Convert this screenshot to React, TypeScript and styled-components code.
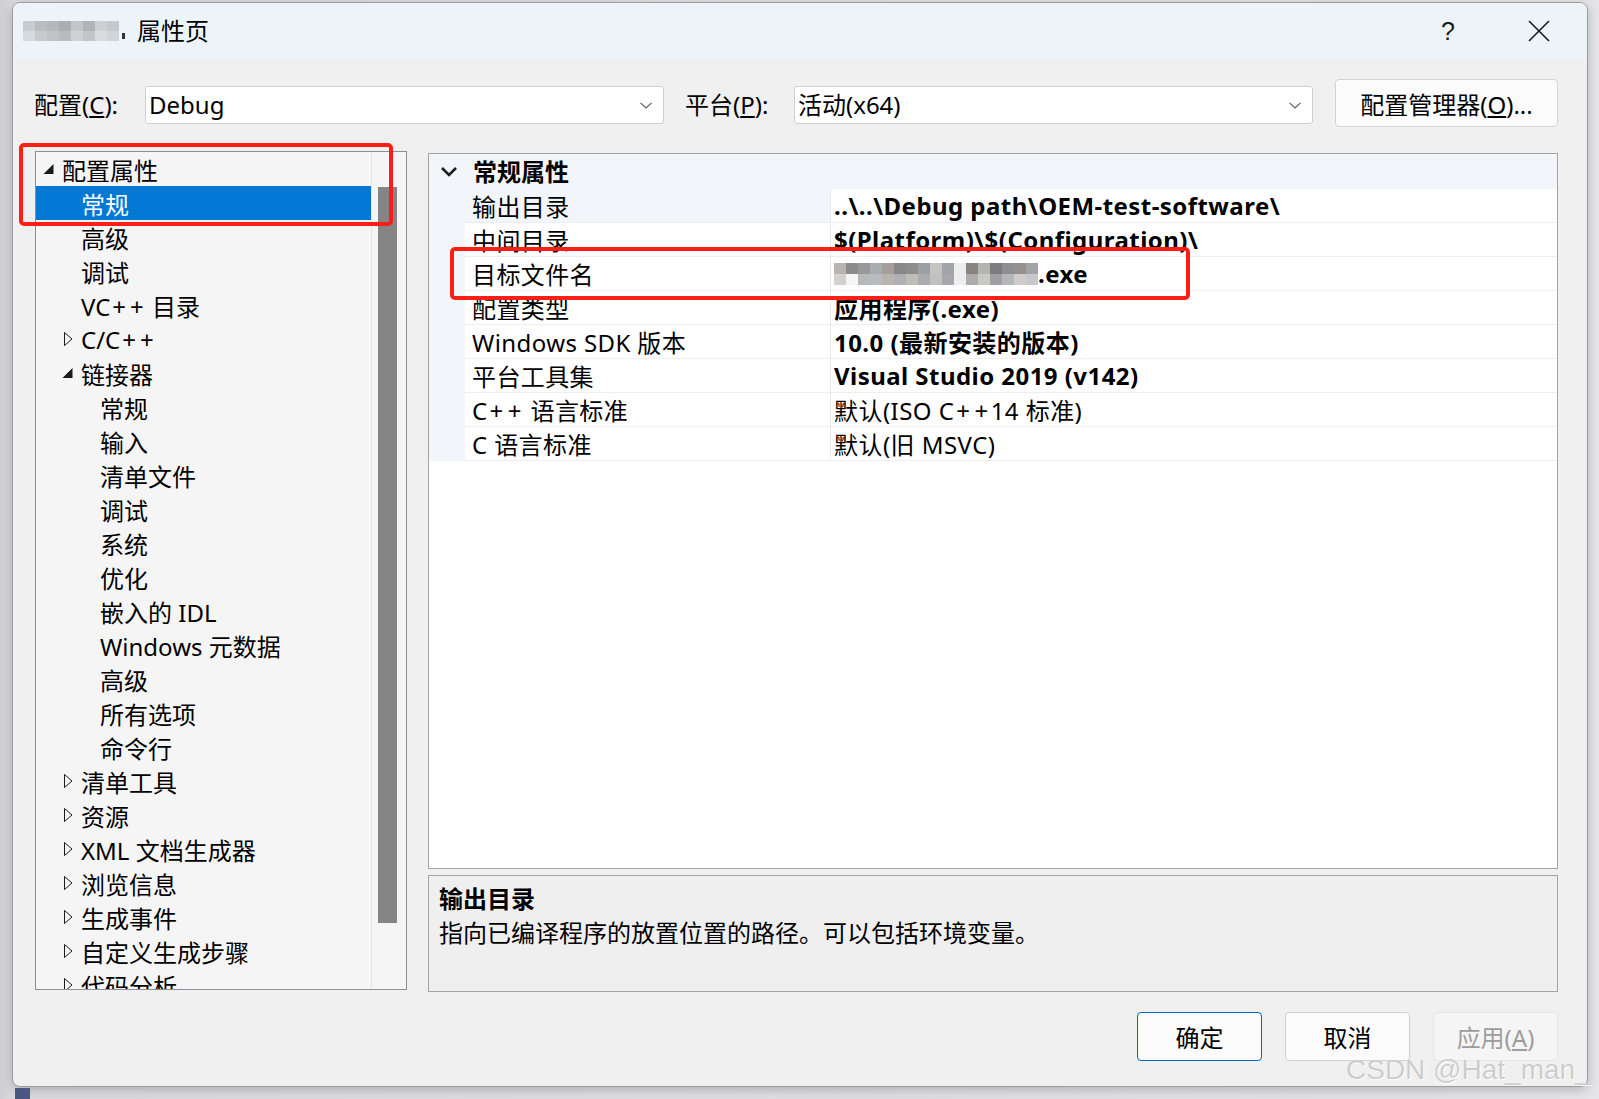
import React from 'react';
import styled, { createGlobalStyle } from 'styled-components';

const FONT = `"Noto Sans", "Noto Sans CJK SC", sans-serif`;

const GlobalStyle = createGlobalStyle`
  html, body {
    margin: 0;
    padding: 0;
  }
  body {
    width: 1599px;
    height: 1099px;
    overflow: hidden;
    background: linear-gradient(90deg, #cfcfd3 0px, #dcdce0 14px, #e6e6e8 100%);
    font-family: ${FONT};
    color: #000;
  }
`;

const Screen = styled.div`
  position: relative;
  width: 1599px;
  height: 1099px;
  padding: 2px 0 0 12px;
  box-sizing: border-box;
`;

const Dialog = styled.div`
  width: 1576px;
  height: 1085px;
  box-sizing: border-box;
  background: #f0f0f0;
  border: 1px solid #9c9c9c;
  border-radius: 8px;
  box-shadow: 0 3px 12px rgba(0, 0, 0, 0.22);
  display: flex;
  flex-direction: column;
  overflow: hidden;
`;

/* ---------- title bar ---------- */

const TitleBar = styled.div`
  height: 56px;
  flex: none;
  background: #edf4f9;
  display: flex;
  align-items: center;
  padding: 0 37px 0 10px;
`;

const Mosaic = styled.div<{ $cols: number; $cw: number; $rh: number }>`
  display: grid;
  grid-template-columns: repeat(${({ $cols }) => $cols}, ${({ $cw }) => $cw}px);
  grid-auto-rows: ${({ $rh }) => $rh}px;
  filter: blur(0.6px);
`;

const Tile = styled.span<{ $c: string }>`
  background: ${({ $c }) => $c};
`;

const TitleText = styled.span`
  font-size: 24px;
  margin-left: 12px;
  line-height: 1;
`;

const TitleTail = styled.span`
  width: 3px;
  height: 6px;
  background: #333;
  margin: 10px 0 0 3px;
`;

const TitleActions = styled.div`
  margin-left: auto;
  display: flex;
  align-items: center;
  gap: 73px;
`;

const Help = styled.span`
  font-family: "Liberation Sans", sans-serif;
  font-size: 25px;
  font-weight: 300;
  color: #1a1a1a;
`;

/* ---------- toolbar ---------- */

const Toolbar = styled.div`
  flex: none;
  margin-top: 20px;
  height: 48px;
  display: flex;
  align-items: center;
  padding-left: 21px;
`;

const FieldLabel = styled.label<{ $width: number; $gap?: number }>`
  width: ${({ $width }) => $width}px;
  margin-left: ${({ $gap = 0 }) => $gap}px;
  font-size: 24px;
  line-height: 1;
  margin-top: 4px;
  flex: none;
`;

const Select = styled.div`
  width: 519px;
  height: 38px;
  margin-top: 4px;
  flex: none;
  box-sizing: border-box;
  background: #fff;
  border: 1px solid #cfcfcf;
  border-radius: 3px;
  display: flex;
  align-items: center;
  padding: 0 11px 0 3px;
  font-size: 24px;
`;

const SelectValue = styled.span`
  flex: 1;
  line-height: 1;
`;

const ManagerButton = styled.button`
  margin-left: 22px;
  width: 223px;
  height: 48px;
  box-sizing: border-box;
  background: #fbfbfb;
  border: 1px solid #d4d4d4;
  border-radius: 4px;
  font-family: ${FONT};
  font-size: 24px;
  color: #000;
  padding: 0;
`;

/* ---------- content ---------- */

const Content = styled.div`
  flex: none;
  margin-top: 24px;
  display: flex;
  padding-left: 22px;
`;

const TreePanel = styled.div`
  width: 372px;
  height: 839px;
  box-sizing: border-box;
  border: 1px solid #8d8f96;
  background: #f5f5f5;
  display: flex;
  overflow: hidden;
`;

const TreeList = styled.ul`
  list-style: none;
  margin: 0;
  padding: 0;
  width: 335px;
  flex: none;
`;

const TreeRow = styled.li<{ $level: number; $selected?: boolean }>`
  height: 34px;
  display: flex;
  align-items: center;
  padding-left: ${({ $level }) => 7 + $level * 19}px;
  background: ${({ $selected }) => ($selected ? '#0078d4' : 'transparent')};
  color: ${({ $selected }) => ($selected ? '#fff' : '#000')};
  font-size: 24px;
  white-space: pre;
`;

const Expander = styled.span`
  width: 19px;
  flex: none;
  display: flex;
  align-items: center;
`;

const Text = styled.span`
  white-space: pre;
`;

const Plus = styled.span`
  margin: 0 2px;
`;

const ScrollTrack = styled.div`
  flex: 1;
  border-left: 1px solid #e4e4e4;
  padding: 35px 0 0 6px;
`;

const ScrollThumb = styled.div`
  width: 19px;
  height: 736px;
  background: #858585;
`;

const RightColumn = styled.div`
  margin-left: 21px;
  margin-top: 2px;
  width: 1130px;
  display: flex;
  flex-direction: column;
`;

const Grid = styled.div`
  height: 716px;
  box-sizing: border-box;
  border: 1px solid #a3a3a3;
  background: #fff;
`;

const CategoryRow = styled.div`
  height: 35px;
  background: #f2f5fa;
  display: flex;
  align-items: center;
  padding-left: 11px;
  font-size: 24px;
  font-weight: 700;
`;

const CategoryTitle = styled.span`
  margin-left: 15px;
  line-height: 1;
`;

const PropRow = styled.div`
  height: 34px;
  display: flex;
`;

const Gutter = styled.div`
  width: 36px;
  flex: none;
  background: #f2f5fa;
`;

const NameCell = styled.div<{ $selected?: boolean }>`
  width: 366px;
  flex: none;
  box-sizing: border-box;
  padding-left: 7px;
  display: flex;
  align-items: center;
  border-bottom: 1px solid #eceef2;
  border-right: 1px solid #e8e9ec;
  background: ${({ $selected }) => ($selected ? '#f2f5fa' : '#fff')};
  font-size: 24px;
  letter-spacing: 0.4px;
`;

const ValueCell = styled.div<{ $bold?: boolean }>`
  flex: 1;
  box-sizing: border-box;
  padding-left: 3px;
  display: flex;
  align-items: center;
  border-bottom: 1px solid #eceef2;
  font-size: 24px;
  letter-spacing: 0.45px;
  font-weight: ${({ $bold }) => ($bold ? 700 : 400)};
`;

const Description = styled.div`
  margin-top: 6px;
  height: 117px;
  box-sizing: border-box;
  border: 1px solid #a3a3a3;
  background: #efefef;
  padding: 6px 10px 0;
  font-size: 24px;
  line-height: 34px;
`;

const DescTitle = styled.div`
  font-weight: 700;
`;

const Footer = styled.div`
  margin-top: 20px;
  display: flex;
  justify-content: flex-end;
  gap: 23px;
`;

const DialogButton = styled.button<{ $primary?: boolean; $disabled?: boolean }>`
  width: 125px;
  height: 49px;
  box-sizing: border-box;
  border-radius: 4px;
  font-family: ${FONT};
  font-size: 24px;
  padding: 0;
  background: ${({ $disabled }) => ($disabled ? '#f5f5f5' : '#fbfbfb')};
  color: ${({ $disabled }) => ($disabled ? '#9d9d9d' : '#000')};
  border: 1px solid
    ${({ $primary, $disabled }) => ($primary ? '#0067c0' : $disabled ? '#e6e6e6' : '#d0d0d0')};
`;

/* ---------- overlays ---------- */

const Highlight = styled.div<{ $x: number; $y: number; $w: number; $h: number }>`
  position: absolute;
  left: ${({ $x }) => $x}px;
  top: ${({ $y }) => $y}px;
  width: ${({ $w }) => $w}px;
  height: ${({ $h }) => $h}px;
  box-sizing: border-box;
  border: 4px solid #fd1f16;
  border-radius: 5px;
  pointer-events: none;
`;

const Watermark = styled.div`
  position: absolute;
  left: 1346px;
  top: 1054px;
  font-family: "Liberation Sans", Arial, sans-serif;
  font-size: 28px;
  color: rgba(196, 196, 196, 0.85);
  text-shadow: 0 0 1px #fff, 1px 1px 0 rgba(255, 255, 255, 0.8);
  white-space: nowrap;
`;

const TaskbarEdge = styled.div`
  position: absolute;
  left: 15px;
  top: 1088px;
  width: 15px;
  height: 11px;
  background: #4b5781;
`;

/* ---------- icons ---------- */

const ChevronDown = () => (
  <svg width="12" height="7" viewBox="0 0 12 7">
    <path d="M0.5 0.8 L6 6 L11.5 0.8" fill="none" stroke="#5a5a5a" strokeWidth="1.1" />
  </svg>
);

const CloseIcon = () => (
  <svg width="22" height="22" viewBox="0 0 22 22">
    <path d="M1 1 L21 21 M21 1 L1 21" stroke="#1a1a1a" strokeWidth="1.6" />
  </svg>
);

const CategoryChevron = () => (
  <svg width="18" height="11" viewBox="0 0 18 11">
    <path d="M2 2 L9 9 L16 2" fill="none" stroke="#1e1e1e" strokeWidth="2.6" />
  </svg>
);

const ExpandedGlyph = () => (
  <svg width="11" height="10" viewBox="0 0 11 10">
    <polygon points="10.5,0 10.5,10 0.5,10" fill="#1a1a1a" />
  </svg>
);

const CollapsedGlyph = () => (
  <svg width="12" height="14" viewBox="0 0 12 14" style={{ marginLeft: 1 }}>
    <polygon points="1.5,0.5 9,7 1.5,13.5" fill="none" stroke="#1a1a1a" strokeWidth="1" />
  </svg>
);

/* the dialog font draws "+" wide; widen it here */
const Label = ({ text }: { text: string }) => (
  <Text>
    {text.split('+').flatMap((part, i) => (i === 0 ? [part] : [<Plus key={i}>+</Plus>, part]))}
  </Text>
);

/* ---------- data ---------- */

type TreeItem = { label: string; level: number; state?: 'open' | 'closed'; selected?: boolean };

const treeItems: TreeItem[] = [
  { label: '配置属性', level: 0, state: 'open' },
  { label: '常规', level: 1, selected: true },
  { label: '高级', level: 1 },
  { label: '调试', level: 1 },
  { label: 'VC++ 目录', level: 1 },
  { label: 'C/C++', level: 1, state: 'closed' },
  { label: '链接器', level: 1, state: 'open' },
  { label: '常规', level: 2 },
  { label: '输入', level: 2 },
  { label: '清单文件', level: 2 },
  { label: '调试', level: 2 },
  { label: '系统', level: 2 },
  { label: '优化', level: 2 },
  { label: '嵌入的 IDL', level: 2 },
  { label: 'Windows 元数据', level: 2 },
  { label: '高级', level: 2 },
  { label: '所有选项', level: 2 },
  { label: '命令行', level: 2 },
  { label: '清单工具', level: 1, state: 'closed' },
  { label: '资源', level: 1, state: 'closed' },
  { label: 'XML 文档生成器', level: 1, state: 'closed' },
  { label: '浏览信息', level: 1, state: 'closed' },
  { label: '生成事件', level: 1, state: 'closed' },
  { label: '自定义生成步骤', level: 1, state: 'closed' },
  { label: '代码分析', level: 1, state: 'closed' },
];

type Prop = { name: string; value: string; bold?: boolean; masked?: boolean };

const props: Prop[] = [
  { name: '输出目录', value: '..\\..\\Debug path\\OEM-test-software\\', bold: true },
  { name: '中间目录', value: '$(Platform)\\$(Configuration)\\', bold: true },
  { name: '目标文件名', value: '.exe', bold: true, masked: true },
  { name: '配置类型', value: '应用程序(.exe)', bold: true },
  { name: 'Windows SDK 版本', value: '10.0 (最新安装的版本)', bold: true },
  { name: '平台工具集', value: 'Visual Studio 2019 (v142)', bold: true },
  { name: 'C++ 语言标准', value: '默认(ISO C++14 标准)' },
  { name: 'C 语言标准', value: '默认(旧 MSVC)' },
];

const titleTiles = [
  '#c9cccf', '#b9bdc0', '#b4b8bb', '#a9aeb1', '#c2c6c8', '#b0b4b7', '#cdd0d2', '#c6c9cb',
  '#d7dadc', '#c8cbce', '#bfc3c6', '#b8bcbf', '#cfd2d4', '#c3c6c9', '#d9dcde', '#d2d5d7',
];

const fileTiles = [
  '#b8b4b4', '#8c8c8c', '#989898', '#a8adb0', '#a49e9c', '#888888', '#8e8c8c', '#9aa0a4', '#c4c4c0',
  '#a0a4a8', '#eceef0', '#888480', '#b4b4b0', '#7c7c80', '#8c9090', '#989090', '#a0a4a8',
  '#d4d0d0', '#f4f6f4', '#b8b8b8', '#b8bcc0', '#b8b4b0', '#b0b0b4', '#c0bcb8', '#acacb0', '#c0c0c0',
  '#a8a8ac', '#eceef0', '#b0acac', '#c8c8c4', '#a0a0a4', '#b4b8b8', '#d0cccc', '#c8c8cc',
];

export default function App() {
  return (
    <>
      <GlobalStyle />
      <Screen>
        <Dialog>
          <TitleBar>
            <Mosaic $cols={8} $cw={12} $rh={10}>
              {titleTiles.map((c, i) => (
                <Tile key={i} $c={c} />
              ))}
            </Mosaic>
            <TitleTail />
            <TitleText>属性页</TitleText>
            <TitleActions>
              <Help>?</Help>
              <CloseIcon />
            </TitleActions>
          </TitleBar>

          <Toolbar>
            <FieldLabel $width={111}>
              配置(<u>C</u>):
            </FieldLabel>
            <Select>
              <SelectValue>Debug</SelectValue>
              <ChevronDown />
            </Select>
            <FieldLabel $width={109} $gap={21}>
              平台(<u>P</u>):
            </FieldLabel>
            <Select>
              <SelectValue>活动(x64)</SelectValue>
              <ChevronDown />
            </Select>
            <ManagerButton>
              配置管理器(<u>O</u>)...
            </ManagerButton>
          </Toolbar>

          <Content>
            <TreePanel>
              <TreeList>
                {treeItems.map((item, i) => (
                  <TreeRow key={i} $level={item.level} $selected={item.selected}>
                    <Expander>
                      {item.state === 'open' && <ExpandedGlyph />}
                      {item.state === 'closed' && <CollapsedGlyph />}
                    </Expander>
                    <Label text={item.label} />
                  </TreeRow>
                ))}
              </TreeList>
              <ScrollTrack>
                <ScrollThumb />
              </ScrollTrack>
            </TreePanel>

            <RightColumn>
              <Grid>
                <CategoryRow>
                  <CategoryChevron />
                  <CategoryTitle>常规属性</CategoryTitle>
                </CategoryRow>
                {props.map((p, i) => (
                  <PropRow key={p.name}>
                    <Gutter />
                    <NameCell $selected={i === 0}>
                      <Label text={p.name} />
                    </NameCell>
                    <ValueCell $bold={p.bold}>
                      {p.masked && (
                        <Mosaic $cols={17} $cw={12} $rh={11}>
                          {fileTiles.map((c, j) => (
                            <Tile key={j} $c={c} />
                          ))}
                        </Mosaic>
                      )}
                      <Label text={p.value} />
                    </ValueCell>
                  </PropRow>
                ))}
              </Grid>

              <Description>
                <DescTitle>输出目录</DescTitle>
                <div>指向已编译程序的放置位置的路径。可以包括环境变量。</div>
              </Description>

              <Footer>
                <DialogButton $primary>确定</DialogButton>
                <DialogButton>取消</DialogButton>
                <DialogButton $disabled>
                  应用(<u>A</u>)
                </DialogButton>
              </Footer>
            </RightColumn>
          </Content>
        </Dialog>

        <Highlight $x={19} $y={143} $w={374} $h={83} />
        <Highlight $x={450} $y={247} $w={740} $h={53} />
        <Watermark>CSDN @Hat_man_</Watermark>
        <TaskbarEdge />
      </Screen>
    </>
  );
}
